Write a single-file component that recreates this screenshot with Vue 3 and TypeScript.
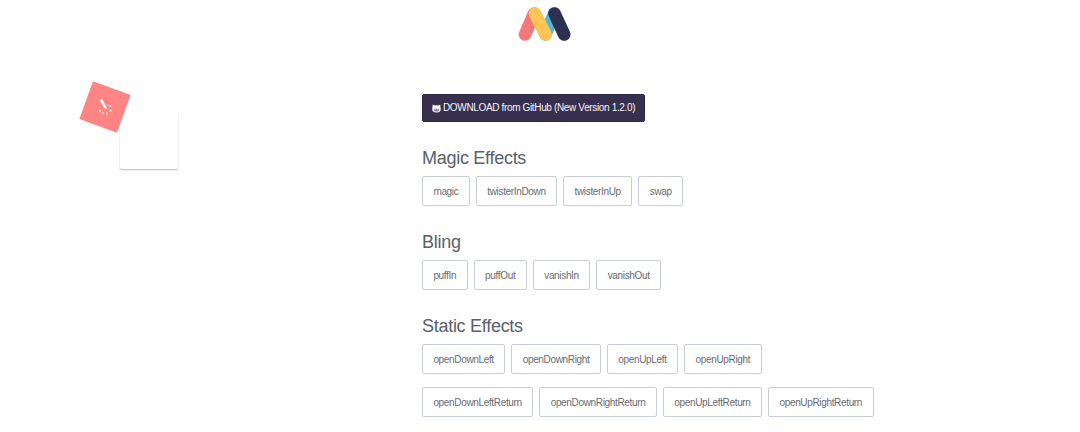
<script setup lang="ts">
interface Group {
  title: string
  rows: string[][]
}

const groups: Group[] = [
  { title: 'Magic Effects', rows: [['magic', 'twisterInDown', 'twisterInUp', 'swap']] },
  { title: 'Bling', rows: [['puffIn', 'puffOut', 'vanishIn', 'vanishOut']] },
  {
    title: 'Static Effects',
    rows: [
      ['openDownLeft', 'openDownRight', 'openUpLeft', 'openUpRight'],
      ['openDownLeftReturn', 'openDownRightReturn', 'openUpLeftReturn', 'openUpRightReturn'],
    ],
  },
]
</script>

<template>
  <div class="page">
    <header class="top">
      <svg class="logo" viewBox="0 0 56 38" width="56" height="38" fill="none" stroke-width="12.6" stroke-linecap="round">
        <path d="M19 10.5 10 31.5" stroke="#f4777b" />
        <path d="M39 10.5 30.5 31.5" stroke="#54b9d1" />
        <path d="M20 10.5 30.5 31.5" stroke="#fcc355" />
        <path d="M39.5 10.5 49.2 31.5" stroke="#2c3153" />
      </svg>
    </header>
    <main class="content">
      <aside class="demo">
        <div class="card"></div>
        <div class="tile">
          <svg viewBox="0 0 16 18" width="16" height="18" fill="#fff6ee">
            <path d="M1.4 2 4.4.7 8.8 9.3Q8.8 11 7.1 10.5Z" />
            <circle cx="2" cy="12.4" r="1" />
            <circle cx="4.8" cy="15" r="1" />
            <circle cx="9" cy="15.5" r="1" />
            <circle cx="12.6" cy="12.2" r="1" />
            <circle cx="12.5" cy="7.7" r="1" />
            <circle cx="10.1" cy="6.6" r=".7" />
          </svg>
        </div>
      </aside>
      <section class="effects">
        <button class="download">
          <svg viewBox="0 0 10 10" width="9" height="9">
            <path fill="#fff" d="M.8.6 3 1.7Q5 1.2 7 1.7L9.2.6 9.4 3.5Q10.2 6 9 8 7.9 9.5 5 9.5 2.1 9.5 1 8-.2 6 .6 3.5Z" />
            <path fill="#7b748d" d="M2.3 5.2h5.4q1 1.7-.4 2.8-2.3.8-4.6 0-1.4-1.1-.4-2.8Z" />
            <path fill="#fff" d="M3 5.8h1v1.4H3zM6 5.8h1v1.4H6z" />
          </svg>
          <span>DOWNLOAD from GitHub (New Version 1.2.0)</span>
        </button>
        <div v-for="group in groups" :key="group.title" class="group">
          <h2>{{ group.title }}</h2>
          <div v-for="(row, i) in group.rows" :key="i" class="row">
            <button v-for="name in row" :key="name" class="effect">{{ name }}</button>
          </div>
        </div>
      </section>
    </main>
  </div>
</template>

<style>
body {
  background: #fefefe;
  overflow: hidden;
}
</style>

<style scoped>
.page {
  width: 1080px;
  height: 432px;
  overflow: hidden;
  background: #fefefe;
  font-family: "Liberation Sans", Arial, sans-serif;
}
.top {
  height: 94px;
  padding: 3px 0 0 515px;
  box-sizing: border-box;
}
.logo {
  display: block;
}
.content {
  display: grid;
  grid-template-columns: 422px 1fr;
}
.demo {
  position: relative;
}
.card {
  width: 58px;
  height: 58px;
  margin: 17px 0 0 120px;
  background: #fff;
  border-radius: 2px;
  box-shadow: 0 1px 1.5px rgba(55, 60, 65, 0.35);
}
.tile {
  position: absolute;
  left: 84.5px;
  top: -7.3px;
  width: 40px;
  height: 40px;
  background: #ff8585;
  transform: rotate(20deg);
}
.tile svg {
  position: absolute;
  left: 12.5px;
  top: 11px;
  transform: rotate(-20deg);
}
button {
  font-family: inherit;
  font-size: 10px;
  letter-spacing: -0.34px;
  line-height: 12px;
  white-space: nowrap;
}
.download {
  display: flex;
  align-items: center;
  gap: 2px;
  width: 223.4px;
  height: 28px;
  padding: 0 0 0 9px;
  border: 1px solid #2d2844;
  border-radius: 2px;
  background: #362f4e;
  color: #f6f4f9;
  letter-spacing: -0.35px;
}
.group {
  margin-top: 25px;
}
h2 {
  margin: 0 0 7px;
  font-size: 18px;
  letter-spacing: -0.28px;
  line-height: 22px;
  font-weight: 400;
  color: #59616b;
}
.row {
  display: flex;
  gap: 6px;
}
.row + .row {
  margin-top: 13px;
}
.effect {
  height: 30px;
  padding: 1px 10.5px 0 10.4px;
  border: 1px solid #c9cdd5;
  border-radius: 2px;
  background: #fff;
  color: #686b70;
}
</style>
